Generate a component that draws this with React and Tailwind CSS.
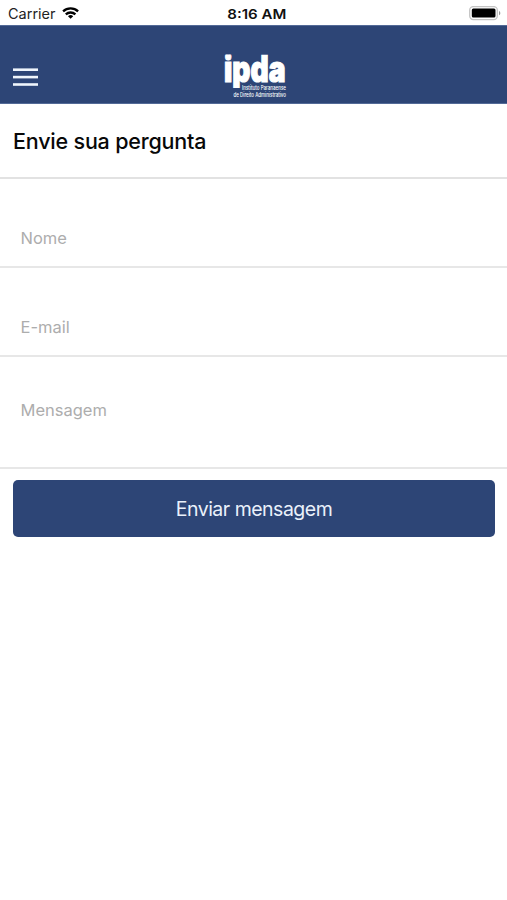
function StatusBar() {
  return (
    <div className="grid h-[25px] grid-cols-3 items-center bg-white pt-[2px] leading-none">
      <svg className="ml-[8px] h-[16px] w-[72px]" viewBox="0 0 72 16">
        <text x="0" y="12.5" fontSize="14" fill="#222" textLength="47.5" lengthAdjust="spacingAndGlyphs">Carrier</text>
        <g transform="translate(54.3 0.6)" fill="none" stroke="#000" strokeWidth="2.3">
          <path d="M.8 4.8a11 11 0 0 1 15 0" />
          <path d="M3.5 7.8a7 7 0 0 1 9.6 0" />
          <path d="M8.3 12.2 5.7 9.6a3.8 3.8 0 0 1 5.2 0z" fill="#000" stroke="none" />
        </g>
      </svg>
      <svg className="ml-[6px] h-[16px] w-[60px] justify-self-center" viewBox="0 0 60 16">
        <text x="0.3" y="12.5" fontSize="13.5" fontWeight="600" fill="#111" textLength="59" lengthAdjust="spacingAndGlyphs">8:16 AM</text>
      </svg>
      <svg className="mr-[5px] h-[16px] w-[34px] justify-self-end" viewBox="0 0 34 16">
        <rect x="1.7" y="0.6" width="27.6" height="13" rx="3.5" fill="#fff" stroke="#c4c4c4" strokeWidth="1.3" />
        <rect x="3.8" y="2.6" width="23.7" height="9" rx="1.5" fill="#000" />
        <path d="M31 5c1.8.7 1.8 3.6 0 4.3z" fill="#999" />
      </svg>
    </div>
  );
}

function Logo() {
  return (
    <svg className="h-[54px] w-[66px] overflow-visible" viewBox="222 48 66 54" fill="#fff">
      <clipPath id="wordmark">
        <rect x="220" y="53.5" width="70" height="33.5" />
      </clipPath>
      <g clipPath="url(#wordmark)">
        <text x="224" y="80.6" fontSize="36.5" fontWeight="900" textLength="61.5" lengthAdjust="spacingAndGlyphs" stroke="#fff" strokeWidth="1.2">ipda</text>
      </g>
      <text x="242" y="88.8" fontSize="6" fontWeight="500" textLength="44" lengthAdjust="spacingAndGlyphs">Instituto Paranaense</text>
      <text x="233.5" y="95.8" fontSize="6.2" fontWeight="500" textLength="52.5" lengthAdjust="spacingAndGlyphs">de Direito Administrativo</text>
    </svg>
  );
}

function Header() {
  return (
    <header className="grid h-[78.5px] grid-cols-3 items-end border-y border-[#536a97] bg-[#2d4576]">
      <svg className="mb-[16px] ml-[13px] h-[20px] w-[25px]" viewBox="0 0 25 20" fill="#eff5fc">
        <rect y="1.4" width="25" height="2.6" />
        <rect y="8.8" width="25" height="2.6" />
        <rect y="16.2" width="25" height="2.6" />
      </svg>
      <div className="ml-[2px] justify-self-center">
        <Logo />
      </div>
    </header>
  );
}

export default function App() {
  const field =
    "block w-full resize-none border-b-2 border-[#e7e7e7] bg-transparent pl-[20.5px] text-[16.5px] text-[#333] outline-none placeholder:text-[#adadad]";
  return (
    <div className="h-[900px] w-full overflow-hidden bg-white font-['Inter','Liberation_Sans',sans-serif]">
      <StatusBar />
      <Header />
      <h1 className="h-[75.5px] border-b-2 border-[#e2e2e2] pt-[23px] pl-[13px] text-[21.5px] leading-[28px] font-medium tracking-[-0.2px] text-[#080808]">
        Envie sua pergunta
      </h1>
      <form>
        <input className={`${field} h-[89px] pt-[30px]`} placeholder="Nome" />
        <input className={`${field} h-[89px] pt-[30px]`} placeholder="E-mail" />
        <textarea className={`${field} h-[112px] pt-[42px] leading-[22px]`} placeholder="Mensagem" />
        <div className="px-[13px] pt-[11px] pr-[12px]">
          <button type="button" className="h-[57px] w-full rounded-[5px] bg-[#2d4576] pt-[3px] text-[19.5px] tracking-[-0.5px] text-[#eaf1fb]">
            Enviar mensagem
          </button>
        </div>
      </form>
    </div>
  );
}
